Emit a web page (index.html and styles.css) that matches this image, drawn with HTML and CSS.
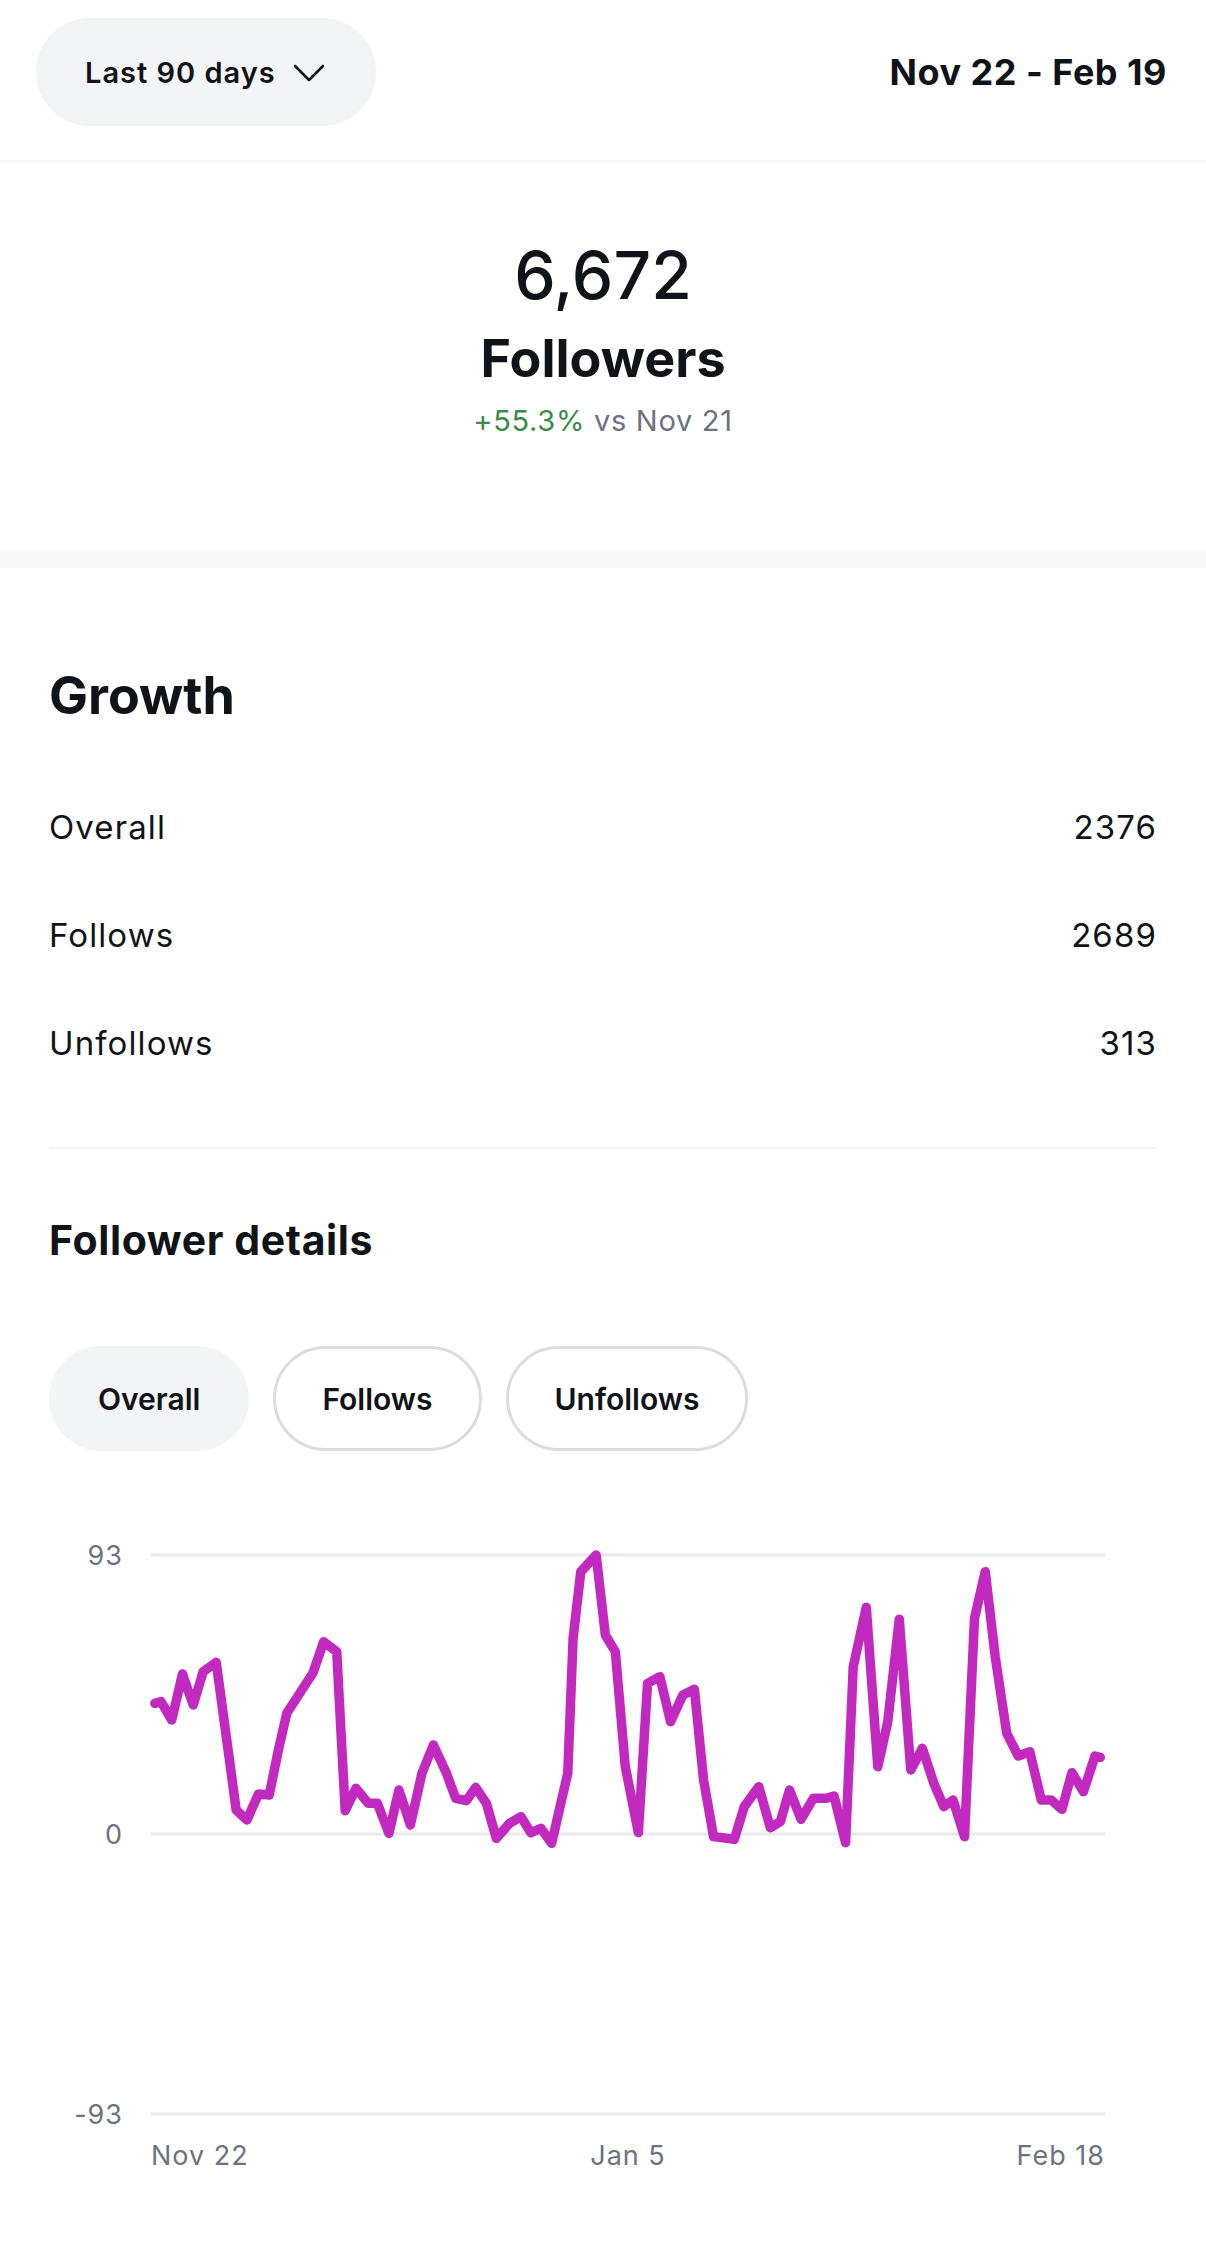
FILE: index.html
```html
<!DOCTYPE html>
<html lang="en">
<head>
<meta charset="utf-8">
<title>Followers</title>
<link rel="stylesheet" href="styles.css">
</head>
<body>
<header class="topbar">
  <div class="range-pill">
    <span>Last 90 days</span>
    <svg class="chev" width="32" height="18" viewBox="0 0 32 18"><polyline points="2,2 16,16 30,2" fill="none" stroke="#101418" stroke-width="2.6" stroke-linecap="round" stroke-linejoin="round"/></svg>
  </div>
  <div class="date-range">Nov 22 - Feb 19</div>
</header>

<section class="hero">
  <div class="hero-count">6,672</div>
  <div class="hero-label">Followers</div>
  <div class="hero-delta"><span class="up">+55.3%</span> vs Nov 21</div>
</section>

<div class="band"></div>

<section class="growth">
  <h2 class="growth-title">Growth</h2>
  <div class="stat-list">
    <div class="stat-row"><span>Overall</span><span>2376</span></div>
    <div class="stat-row"><span>Follows</span><span>2689</span></div>
    <div class="stat-row"><span>Unfollows</span><span>313</span></div>
  </div>
  <div class="divider"></div>
  <h3 class="details-title">Follower details</h3>
  <div class="tabs">
    <div class="tab active">Overall</div>
    <div class="tab">Follows</div>
    <div class="tab">Unfollows</div>
  </div>
</section>

<div class="chart">
  <svg width="1206" height="807" viewBox="0 1451 1206 807">
    <g class="grid">
      <rect x="151" y="1553.5" width="954" height="3"/>
      <rect x="151" y="1832.5" width="954" height="3"/>
      <rect x="151" y="2112.5" width="954" height="3"/>
    </g>
    <g class="axis-label">
      <text x="123" y="1565" text-anchor="end">93</text>
      <text x="123" y="1844" text-anchor="end">0</text>
      <text x="123" y="2124" text-anchor="end">-93</text>
      <text x="151" y="2165" text-anchor="start">Nov 22</text>
      <text x="628" y="2165" text-anchor="middle">Jan 5</text>
      <text x="1105" y="2165" text-anchor="end">Feb 18</text>
    </g>
    <g transform="translate(1.35 1500) scale(0.76746 0.33333)">
      <polyline class="series" vector-effect="non-scaling-stroke" points="200,610 208,605 222,660 236,522 250,615 263,515 280,487 306,930 320,960 335,882 349,885 361,750 372,639 406,519 420,425 437,455 448,932 462,865 478,910 490,910 505,1000 518,870 533,975 548,820 563,735 580,820 592,895 606,902 618,862 632,910 645,1015 662,970 677,950 690,998 703,985 717,1030 738,820 745,415 755,215 775,165 787,405 800,455 813,800 830,998 842,550 858,530 872,665 888,585 903,568 915,840 928,1010 955,1018 968,920 987,860 1002,983 1015,965 1027,870 1042,958 1058,895 1075,895 1085,888 1100,1028 1110,500 1127,322 1142,800 1155,665 1170,358 1185,810 1200,745 1215,850 1228,920 1240,900 1255,1010 1268,355 1282,215 1295,470 1310,700 1325,768 1340,755 1355,900 1368,900 1382,928 1395,818 1410,875 1425,768 1432,772"/>
    </g>
  </svg>
</div>
</body>
</html>
```

FILE: styles.css
```css
* {
  box-sizing: border-box;
  margin: 0;
  padding: 0;
}

body {
  width: 1206px;
  background: #ffffff;
  color: #101418;
  font-family: Inter, "Noto Sans", "Liberation Sans", sans-serif;
}

.topbar {
  display: flex;
  justify-content: space-between;
  align-items: center;
  height: 162px;
  padding: 0 39px 16px 36px;
  border-bottom: 2px solid #f3f4f5;
}

.range-pill {
  display: flex;
  align-items: center;
  gap: 17px;
  height: 108px;
  padding: 0 51px 0 49px;
  background: #f3f4f6;
  border-radius: 54px;
  font-size: 29px;
  font-weight: 600;
  letter-spacing: 1px;
  line-height: 1;
}

.chev {
  display: block;
  margin-top: 2px;
}

.date-range {
  font-size: 36px;
  font-weight: 700;
  letter-spacing: 0.5px;
  line-height: 1;
}

.hero {
  padding: 73px 0 111px;
  text-align: center;
}

.hero-count {
  font-size: 66px;
  font-weight: 500;
  line-height: 80px;
}

.hero-label {
  margin-top: 12px;
  font-size: 52px;
  font-weight: 700;
  line-height: 64px;
}

.hero-delta {
  margin-top: 12px;
  font-size: 29px;
  letter-spacing: 0.7px;
  line-height: 36px;
  color: #6b7280;
}

.hero-delta .up {
  color: #3b8a47;
}

.band {
  height: 18px;
  background: #f6f7f7;
}

.growth {
  padding: 96px 49px 0;
}

.growth-title {
  font-size: 52px;
  font-weight: 700;
  line-height: 64px;
}

.stat-list {
  margin-top: 45px;
}

.stat-row {
  display: flex;
  justify-content: space-between;
  align-items: center;
  height: 108px;
  font-size: 33px;
  font-weight: 400;
  letter-spacing: 1.1px;
}

.divider {
  margin-top: 50px;
  height: 2px;
  background: #f3f4f6;
}

.details-title {
  margin-top: 63px;
  font-size: 41px;
  font-weight: 700;
  letter-spacing: 0.6px;
  line-height: 56px;
}

.tabs {
  display: flex;
  gap: 24px;
  margin-top: 78px;
}

.tab {
  display: flex;
  align-items: center;
  height: 105px;
  padding: 0 46px;
  border: 3px solid #dcdcdc;
  border-radius: 53px;
  font-size: 30px;
  font-weight: 600;
  line-height: 1;
}

.tab.active {
  background: #f3f4f6;
  border-color: #f3f4f6;
}

.chart svg {
  display: block;
}

.grid rect {
  fill: #e8eaed;
}

.axis-label text {
  font-family: Inter, "Noto Sans", "Liberation Sans", sans-serif;
  font-size: 27px;
  letter-spacing: 1px;
  fill: #6b7280;
}

.series {
  fill: none;
  stroke: #c22abf;
  stroke-width: 9.5;
  stroke-linejoin: round;
  stroke-linecap: round;
}
```
